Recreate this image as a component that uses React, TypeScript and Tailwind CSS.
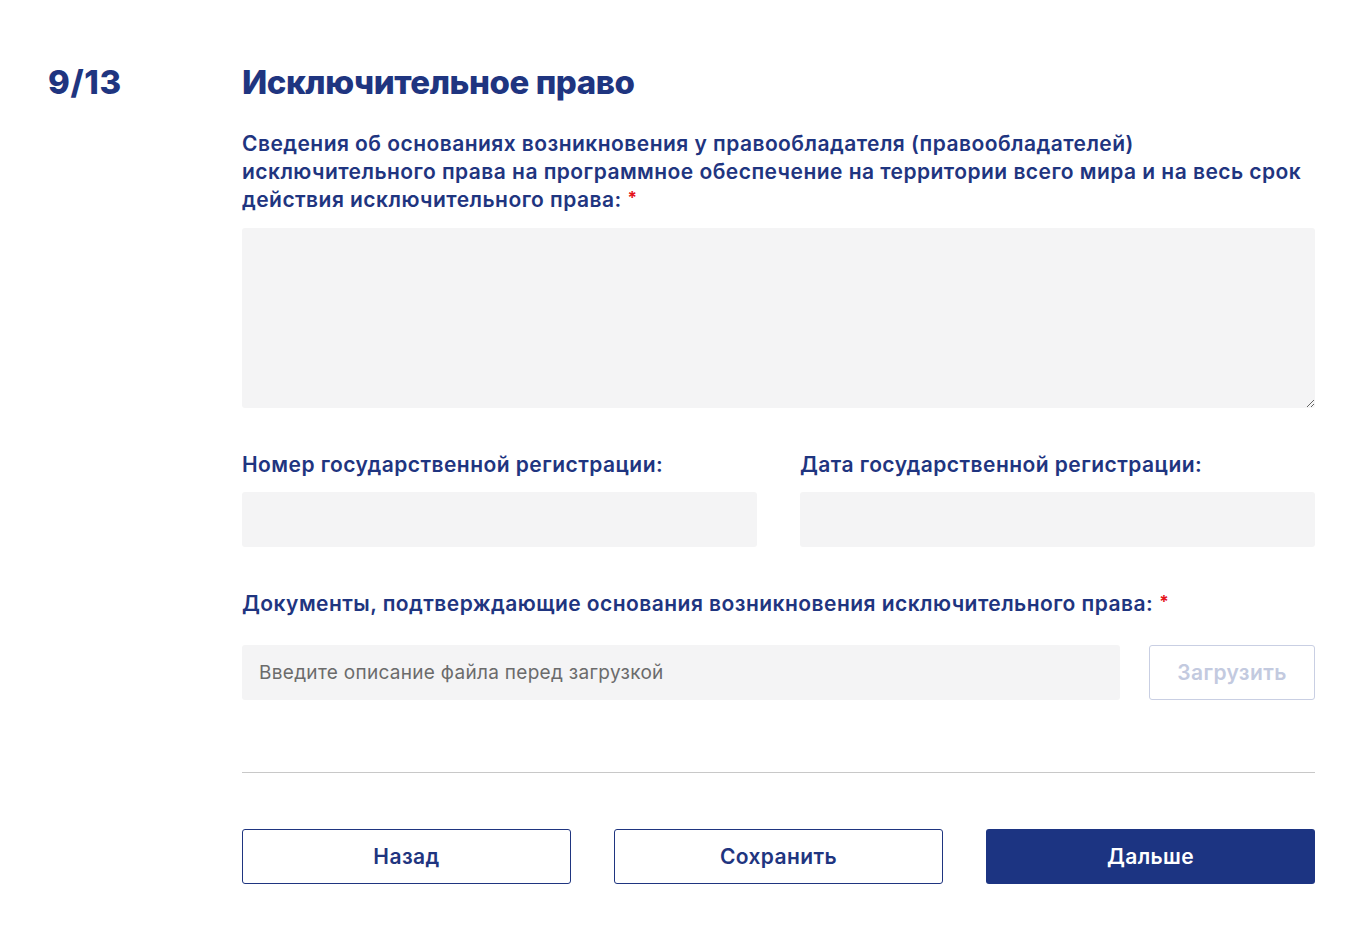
import React from 'react'

const font = { fontFamily: 'Inter, "Noto Sans", sans-serif' }

function Label({ children, required }: { children: React.ReactNode; required?: boolean }) {
  return (
    <p className='text-[21px] leading-[28px] font-semibold tracking-[0.45px] text-[#1f3580]'>
      {children}
      {required && <span className='relative -top-[3px] ml-1.5 text-[17px] font-bold text-[#e5141b]'>*</span>}
    </p>
  )
}

function App() {
  return (
    <div style={font} className='min-h-screen bg-white'>
      <div className='flex pl-[48px] pr-[45px] pt-[62px]'>
        <div className='w-[194px] shrink-0 text-[33px] leading-[40px] font-extrabold tracking-[0.6px] text-[#1f3580]'>9/13</div>

        <div className='flex-1'>
          <h1 className='text-[33px] leading-[40px] font-extrabold text-[#1f3580] tracking-[-0.45px]'>Исключительное право</h1>

          <div className='mt-[28px]'>
            <Label required>
              Сведения об основаниях возникновения у правообладателя (правообладателей) исключительного права на программное обеспечение на территории всего мира и на весь срок действия исключительного права:
            </Label>
            <textarea className='mt-[13px] block w-full h-[180px] bg-[#f4f4f5] rounded-[3px] outline-none p-4 resize-y' />
          </div>

          <div className='grid grid-cols-2 gap-x-[43px] mt-[43px]'>
            <div>
              <Label>Номер государственной регистрации:</Label>
              <input className='mt-[13px] block w-full h-[55px] bg-[#f4f4f5] rounded-[3px] outline-none px-4' />
            </div>
            <div>
              <Label>Дата государственной регистрации:</Label>
              <input className='mt-[13px] block w-full h-[55px] bg-[#f4f4f5] rounded-[3px] outline-none px-4' />
            </div>
          </div>

          <div className='mt-[43px]'>
            <Label required>Документы, подтверждающие основания возникновения исключительного права:</Label>
            <div className='flex gap-[29px] mt-[26px]'>
              <input
                placeholder='Введите описание файла перед загрузкой'
                className='flex-1 h-[55px] bg-[#f4f4f5] rounded-[3px] outline-none px-[17px] text-[19px] tracking-[0.3px] text-[#333] placeholder:text-[#6b6b6b]'
              />
              <button className='w-[166px] h-[55px] border border-[#c9cfe3] rounded-[3px] text-[21px] font-semibold tracking-[0.4px] text-[#c3cadf] bg-white'>
                Загрузить
              </button>
            </div>
          </div>

          <div className='mt-[72px] border-t border-[#c8c8c8]' />

          <div className='grid grid-cols-3 gap-x-[43px] mt-[56px]'>
            <button className='h-[55px] border-[1.5px] border-[#1f3580] rounded-[3px] text-[21px] font-semibold tracking-[0.4px] text-[#1f3580] bg-white'>Назад</button>
            <button className='h-[55px] border-[1.5px] border-[#1f3580] rounded-[3px] text-[21px] font-semibold tracking-[0.4px] text-[#1f3580] bg-white'>Сохранить</button>
            <button className='h-[55px] rounded-[3px] text-[21px] font-semibold tracking-[0.4px] text-white bg-[#1c3482]'>Дальше</button>
          </div>
        </div>
      </div>
    </div>
  )
}

export default App
